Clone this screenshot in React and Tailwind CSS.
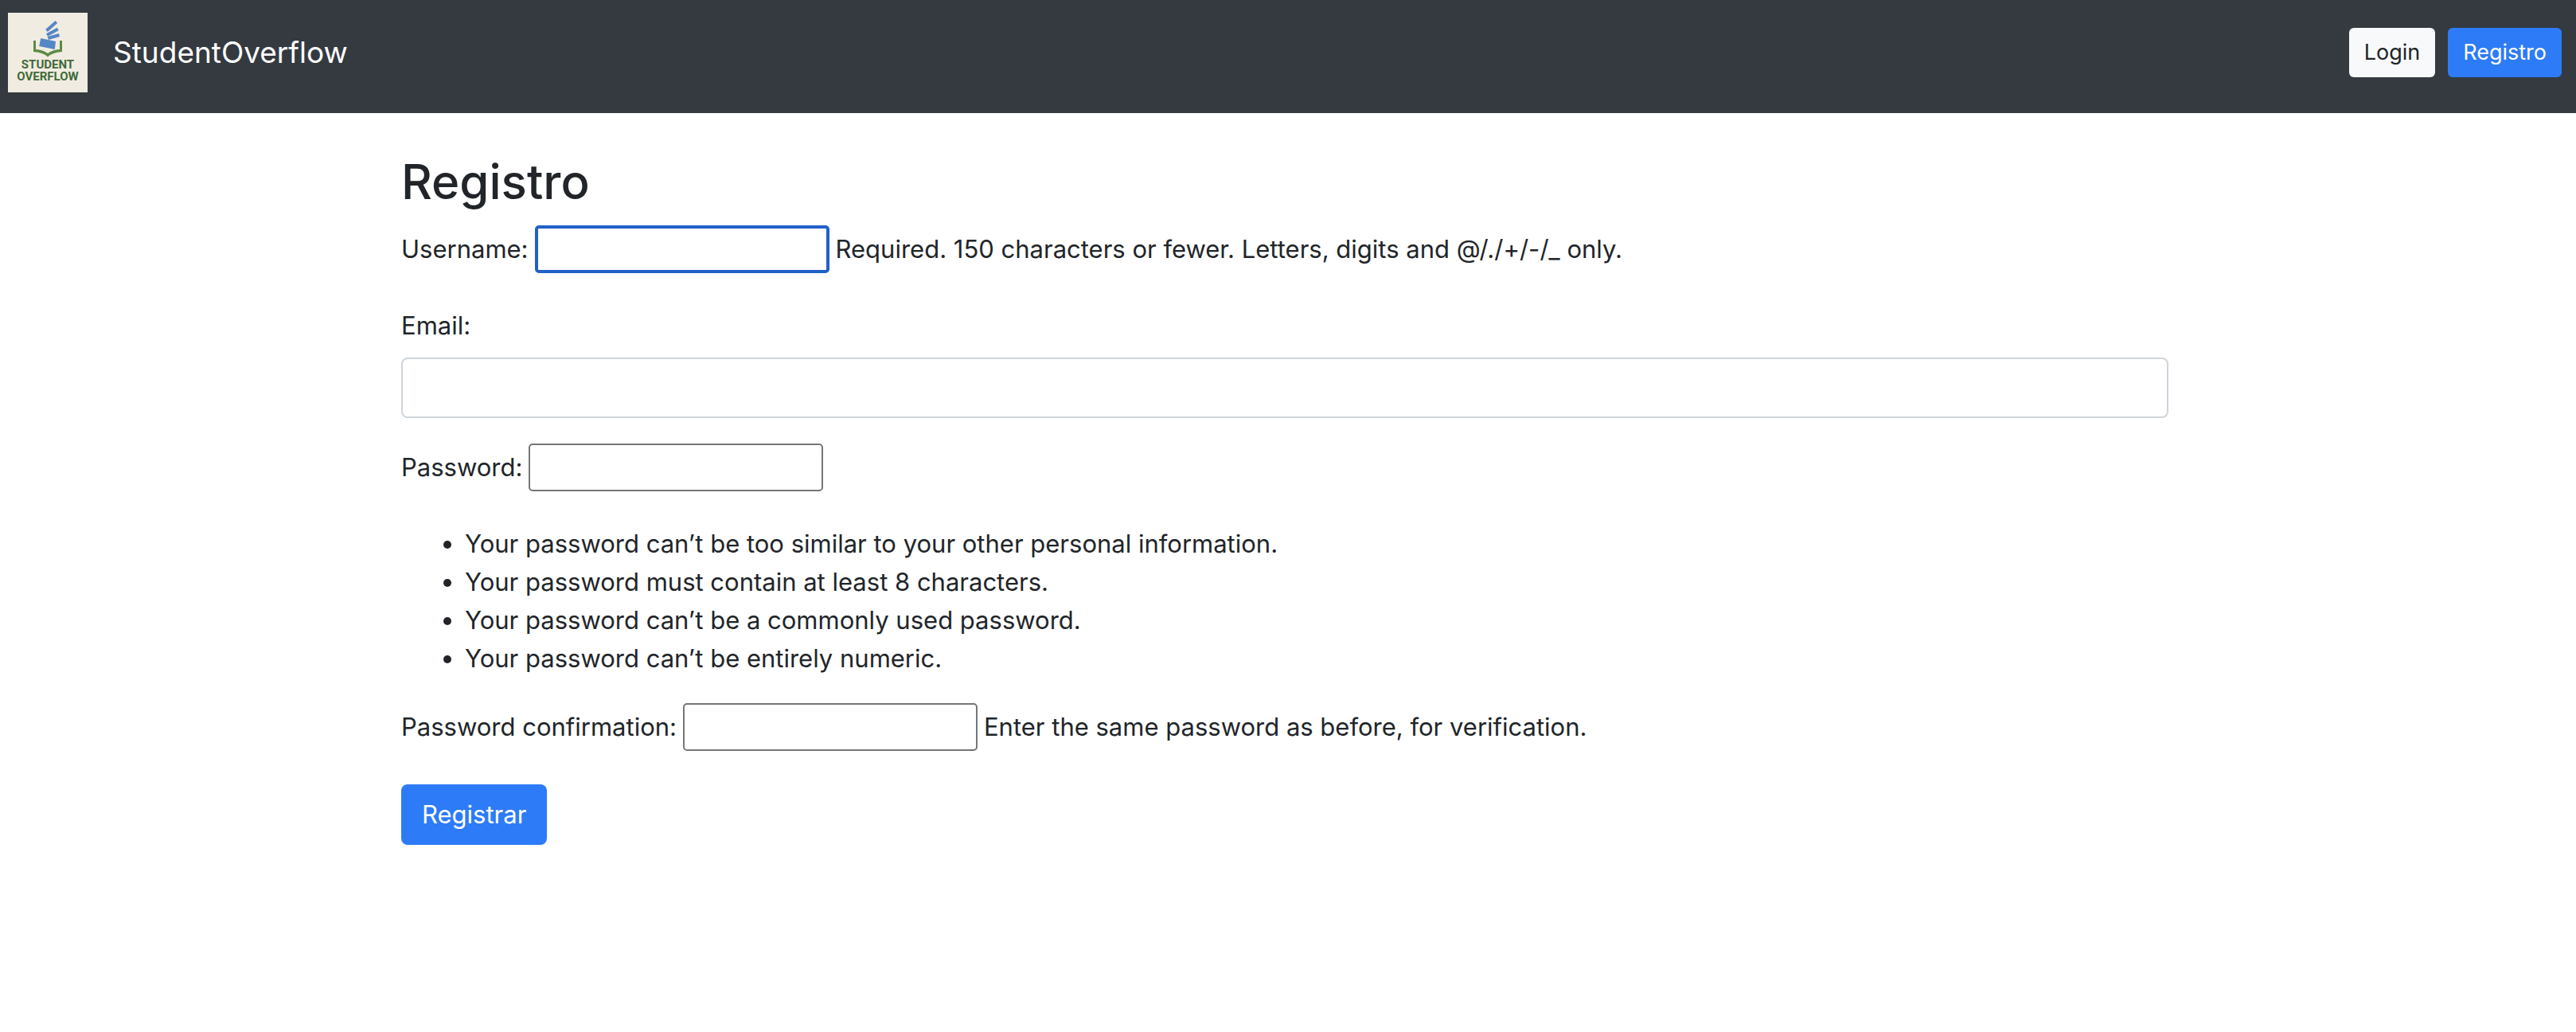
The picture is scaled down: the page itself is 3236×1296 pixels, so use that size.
const passwordRules = [
  "Your password can’t be too similar to your other personal information.",
  "Your password must contain at least 8 characters.",
  "Your password can’t be a commonly used password.",
  "Your password can’t be entirely numeric.",
];

function Logo() {
  return (
    <svg viewBox="0 0 100 100" className="size-25" role="img" aria-label="Student Overflow">
      <rect width="100" height="100" fill="#f1ece1" />
      <g stroke="#5586c6" strokeWidth="4">
        <path d="M48.5 22.5 60.8 11.5" />
        <path d="M49 28 62.8 20.5" />
        <path d="M50.3 32 64.5 28" />
      </g>
      <path d="M41.2 32 60 36 58.8 46 39.2 42Z" fill="#5586c6" />
      <path
        d="M32 35h3v11q9 .5 15 5 6-4.500 15-5V35h3v14q-13 1-18 6.500Q45 50 32 49Z"
        fill="#5d8a45"
      />
      <g fill="#3f6b3a" fontFamily="Roboto, sans-serif" fontWeight="700" fontSize="15" textAnchor="middle">
        <text x="50" y="70">STUDENT</text>
        <text x="50" y="85">OVERFLOW</text>
      </g>
    </svg>
  );
}

function InlineField({ id, label, type = "text", help, focused = false }) {
  return (
    <div className="mb-[42px] flex items-center gap-2">
      <label htmlFor={id}>{label}</label>
      <input
        id={id}
        type={type}
        className={
          focused
            ? "h-[60px] w-[370px] rounded-[5px] border-4 border-[#2160c9] px-1 outline-none"
            : "h-[60px] w-[370px] rounded-[5px] border-2 border-[#767676] px-1"
        }
      />
      {help && <span>{help}</span>}
    </div>
  );
}

export default function App() {
  return (
    <div className="min-h-screen bg-white font-['Inter',sans-serif] text-[31px] leading-[48px] text-[#212529]">
      <nav className="flex items-start justify-between bg-[#343a40] pt-4 pr-[18px] pb-[26px] pl-[10px]">
        <a href="#" className="flex items-center gap-8 text-[37px] text-white">
          <Logo />
          StudentOverflow
        </a>
        <div className="mt-[19px] flex gap-4 text-[27px] leading-[42px]">
          <button type="button" className="rounded-md bg-[#f8f9fa] px-[19px] py-[10px]">Login</button>
          <button type="button" className="rounded-md bg-[#2d7bf7] px-[19px] py-[10px] text-white">Registro</button>
        </div>
      </nav>

      <main className="pt-12 pr-2">
        <form className="mx-auto max-w-[2220px]">
          <h2 className="mb-4 text-[60px] leading-[77px] font-medium">Registro</h2>

          <InlineField
            id="username"
            label="Username:"
            help="Required. 150 characters or fewer. Letters, digits and @/./+/-/_ only."
            focused
          />

          <label htmlFor="email" className="mb-4 block">Email:</label>
          <input
            id="email"
            type="email"
            className="mb-8 block h-[76px] w-full rounded-lg border-2 border-[#ced4da] px-6"
          />

          <InlineField id="password" label="Password:" type="password" />

          <ul className="mb-8 list-disc pl-20">
            {passwordRules.map((rule) => (
              <li key={rule}>{rule}</li>
            ))}
          </ul>

          <InlineField
            id="password-confirmation"
            label="Password confirmation:"
            type="password"
            help="Enter the same password as before, for verification."
          />

          <button type="submit" className="rounded-lg bg-[#2d7bf7] px-[26px] py-[14px] text-white">Registrar</button>
        </form>
      </main>
    </div>
  );
}
